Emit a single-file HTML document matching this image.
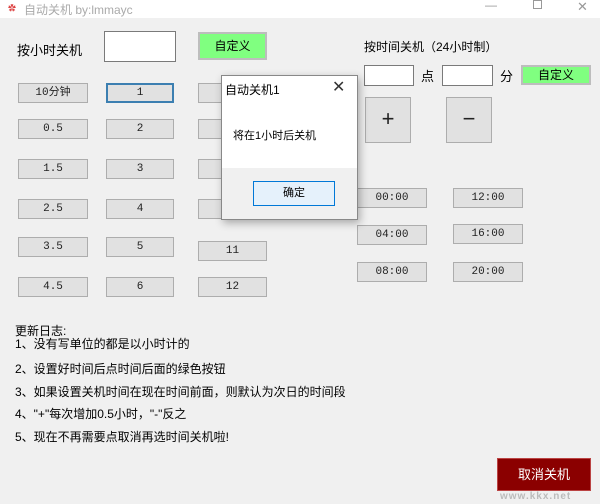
<!DOCTYPE html>
<html><head><meta charset="utf-8"><style>
*{margin:0;padding:0;box-sizing:border-box}
body{width:600px;height:504px;background:#f0f0f0;position:relative;overflow:hidden;font-family:"Liberation Sans","Noto Sans CJK SC",sans-serif;font-size:12px;color:#000}
.a{position:absolute}
.b{position:absolute;background:#e1e1e1;border:1px solid #adadad;text-align:center;font-size:11px;font-family:"Liberation Mono","Noto Sans CJK SC",monospace;color:#222}
.g{position:absolute;background:#80ff80;border:2px solid #bdbdbd;text-align:center;font-size:12px}
.t{position:absolute;background:#fff;border:1px solid #7a7a7a}
</style></head><body>
<div class="a" style="left:0;top:0;width:600px;height:18px;background:#fff"></div>
<div class="a" style="left:8px;top:3px;color:#d44;font-size:8px">✿</div>
<div class="a" style="left:24px;top:1px;color:#aaa;font-size:12px">自动关机 by:lmmayc</div>
<div class="a" style="left:485px;top:-2px;color:#999;font-size:12px">—</div>
<div class="a" style="left:533px;top:0px;width:9px;height:9px;border:1px solid #999"></div>
<div class="a" style="left:577px;top:-1px;color:#999;font-size:13px">✕</div>

<div class="a" style="left:17px;top:40px;font-size:13px">按小时关机</div>
<div class="t" style="left:104px;top:31px;width:72px;height:31px"></div>
<div class="g" style="left:198px;top:32px;width:69px;height:28px;line-height:24px">自定义</div>

<div class="b" style="left:18px;top:83px;width:70px;height:20px;line-height:18px">10分钟</div>
<div class="b" style="left:106px;top:83px;width:68px;height:20px;line-height:16px;border:2px solid #3c7fb1">1</div>
<div class="b" style="left:18px;top:119px;width:70px;height:20px;line-height:18px">0.5</div>
<div class="b" style="left:106px;top:119px;width:68px;height:20px;line-height:18px">2</div>
<div class="b" style="left:18px;top:159px;width:70px;height:20px;line-height:18px">1.5</div>
<div class="b" style="left:106px;top:159px;width:68px;height:20px;line-height:18px">3</div>
<div class="b" style="left:18px;top:199px;width:70px;height:20px;line-height:18px">2.5</div>
<div class="b" style="left:106px;top:199px;width:68px;height:20px;line-height:18px">4</div>
<div class="b" style="left:18px;top:237px;width:70px;height:20px;line-height:18px">3.5</div>
<div class="b" style="left:106px;top:237px;width:68px;height:20px;line-height:18px">5</div>
<div class="b" style="left:18px;top:277px;width:70px;height:20px;line-height:18px">4.5</div>
<div class="b" style="left:106px;top:277px;width:68px;height:20px;line-height:18px">6</div>
<div class="b" style="left:198px;top:83px;width:69px;height:20px"></div>
<div class="b" style="left:198px;top:119px;width:69px;height:20px"></div>
<div class="b" style="left:198px;top:159px;width:69px;height:20px"></div>
<div class="b" style="left:198px;top:199px;width:69px;height:20px"></div>
<div class="b" style="left:198px;top:241px;width:69px;height:20px;line-height:18px">11</div>
<div class="b" style="left:198px;top:277px;width:69px;height:20px;line-height:18px">12</div>

<div class="a" style="left:364px;top:38px;font-size:12px">按时间关机（24小时制）</div>
<div class="t" style="left:364px;top:65px;width:50px;height:21px"></div>
<div class="a" style="left:421px;top:66px;font-size:13px">点</div>
<div class="t" style="left:442px;top:65px;width:51px;height:21px"></div>
<div class="a" style="left:500px;top:66px;font-size:13px">分</div>
<div class="g" style="left:521px;top:65px;width:70px;height:20px;line-height:16px">自定义</div>
<div class="b" style="left:365px;top:97px;width:46px;height:46px;line-height:42px;font-size:22px;font-family:'Liberation Sans'">+</div>
<div class="b" style="left:446px;top:97px;width:46px;height:46px;line-height:42px;font-size:22px;font-family:'Liberation Sans'">−</div>
<div class="b" style="left:357px;top:188px;width:70px;height:20px;line-height:18px">00:00</div>
<div class="b" style="left:453px;top:188px;width:70px;height:20px;line-height:18px">12:00</div>
<div class="b" style="left:357px;top:225px;width:70px;height:20px;line-height:18px">04:00</div>
<div class="b" style="left:453px;top:224px;width:70px;height:20px;line-height:18px">16:00</div>
<div class="b" style="left:357px;top:262px;width:70px;height:20px;line-height:18px">08:00</div>
<div class="b" style="left:453px;top:262px;width:70px;height:20px;line-height:18px">20:00</div>

<div class="a" style="left:221px;top:75px;width:137px;height:145px;background:#fff;border:1px solid #888;box-shadow:2px 3px 8px rgba(0,0,0,.3)">
<div class="a" style="left:3px;top:5px;font-size:12px">自动关机1</div>
<div class="a" style="left:110px;top:1px;font-size:16px;color:#333">✕</div>
<div class="a" style="left:11px;top:51px;font-size:11px">将在1小时后关机</div>
<div class="a" style="left:0;top:92px;width:135px;height:51px;background:#f0f0f0"></div>
<div class="a" style="left:31px;top:105px;width:82px;height:25px;background:#e5f1fb;border:1px solid #0078d7;text-align:center;line-height:23px;font-size:11px">确定</div>
</div>

<div class="a" style="left:15px;top:325px;font-size:12px;line-height:13px">更新日志:<br>1、没有写单位的都是以小时计的</div>
<div class="a" style="left:15px;top:360px;font-size:12px">2、设置好时间后点时间后面的绿色按钮</div>
<div class="a" style="left:15px;top:383px;font-size:12px">3、如果设置关机时间在现在时间前面，则默认为次日的时间段</div>
<div class="a" style="left:15px;top:405px;font-size:12px">4、"+"每次增加0.5小时，"-"反之</div>
<div class="a" style="left:15px;top:428px;font-size:12px">5、现在不再需要点取消再选时间关机啦!</div>

<div class="a" style="left:497px;top:458px;width:94px;height:33px;background:#8b0000;border:1px solid #b44;color:#fff;text-align:center;line-height:31px;font-size:13px">取消关机</div>
<div class="a" style="left:500px;top:491px;color:#bbb;font-size:10px;font-weight:bold;letter-spacing:1px">www.kkx.net</div>
</body></html>
